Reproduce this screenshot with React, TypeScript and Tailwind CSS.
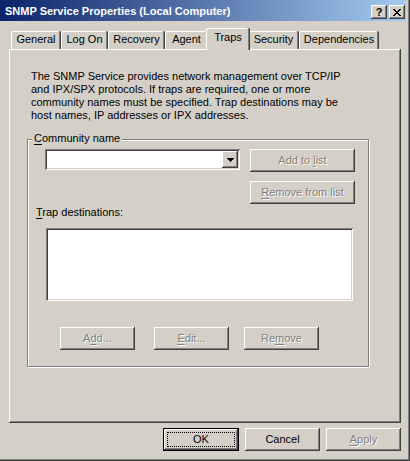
import type { ReactNode } from 'react';

const RAISED =
  'shadow-[inset_-1px_-1px_0_#404040,inset_1px_1px_0_#ffffff,inset_-2px_-2px_0_#808080,inset_2px_2px_0_#d4d0c8]';
const SUNKEN =
  'shadow-[inset_1px_1px_0_#808080,inset_-1px_-1px_0_#ffffff,inset_2px_2px_0_#404040,inset_-2px_-2px_0_#d4d0c8]';
const DISABLED = 'text-[#808080] [text-shadow:1px_1px_0_#ffffff]';

type Tab = { label: string; width: number; active?: boolean };

const TABS: Tab[] = [
  { label: 'General', width: 50 },
  { label: 'Log On', width: 47 },
  { label: 'Recovery', width: 57 },
  { label: 'Agent', width: 43 },
  { label: 'Traps', width: 40, active: true },
  { label: 'Security', width: 51 },
  { label: 'Dependencies', width: 80 },
];

function Key({ children }: { children: ReactNode }) {
  return <span className="underline underline-offset-[2px]">{children}</span>;
}

function Button({ children, width, disabled }: { children: ReactNode; width: number; disabled?: boolean }) {
  return (
    <div
      className={`flex h-[23px] shrink-0 items-center justify-center whitespace-pre bg-[#d4d0c8] ${RAISED} ${disabled ? DISABLED : 'text-black'}`}
      style={{ width }}
    >
      {children}
    </div>
  );
}

function CaptionButton({ children }: { children: ReactNode }) {
  return (
    <div className={`flex h-[14px] w-[16px] items-center justify-center bg-[#d4d0c8] ${RAISED}`}>{children}</div>
  );
}

function TabStrip() {
  return (
    <div className="mt-[7px] flex h-[21px] items-end pl-[11px]">
      {TABS.map((tab) =>
        tab.active ? (
          <div
            key={tab.label}
            className="relative z-10 -mx-[2px] -mb-[1px] flex h-[22px] items-start justify-center rounded-t-[2px] bg-[#d4d0c8] pt-[3px] shadow-[inset_-1px_0_0_#404040,inset_1px_1px_0_#ffffff,inset_-2px_0_0_#808080]"
            style={{ width: tab.width + 4 }}
          >
            {tab.label}
          </div>
        ) : (
          <div
            key={tab.label}
            className="flex h-[18px] items-start justify-center rounded-t-[2px] bg-[#d4d0c8] pt-[2px] shadow-[inset_-1px_0_0_#404040,inset_1px_1px_0_#ffffff,inset_-2px_0_0_#808080]"
            style={{ width: tab.width }}
          >
            {tab.label}
          </div>
        ),
      )}
    </div>
  );
}

function CommunityGroup() {
  return (
    <div className="relative ml-[18px] mt-[17px] h-[228px] w-[342px] border border-[#808080] pl-[8px] pt-[9px] shadow-[inset_1px_1px_0_#ffffff,1px_1px_0_#ffffff]">
      <div className="absolute -top-[8px] left-[4px] bg-[#d4d0c8] px-[2px] leading-[13px]">
        <Key>C</Key>ommunity name
      </div>

      <div className="flex items-start">
        <div className={`ml-[9px] flex h-[21px] w-[195px] items-start justify-end bg-white p-[2px] ${SUNKEN}`}>
          <div className={`flex h-[17px] w-[16px] items-center justify-center bg-[#d4d0c8] ${RAISED}`}>
            <svg width="7" height="4" viewBox="0 0 7 4" shapeRendering="crispEdges">
              <path d="M0 0h7v1H0zM1 1h5v1H1zM2 2h3v1H2zM3 3h1v1H3z" fill="#000" />
            </svg>
          </div>
        </div>
        <div className="ml-[10px]">
          <Button width={105} disabled>
            {'Add to '}
            <Key>l</Key>
            {'ist'}
          </Button>
        </div>
      </div>

      <div className="ml-[214px] mt-[9px]">
        <Button width={105} disabled>
          <Key>R</Key>emove from list
        </Button>
      </div>

      <div className="mt-[2px] leading-[13px]">
        <Key>T</Key>rap destinations:
      </div>

      <div className={`ml-[10px] mt-[9px] h-[73px] w-[307px] bg-white ${SUNKEN}`} />

      <div className="ml-[24px] mt-[26px] flex">
        <Button width={75} disabled>
          A<Key>d</Key>d...
        </Button>
        <div className="ml-[19px]">
          <Button width={75} disabled>
            <Key>E</Key>dit...
          </Button>
        </div>
        <div className="ml-[15px]">
          <Button width={75} disabled>
            Re<Key>m</Key>ove
          </Button>
        </div>
      </div>
    </div>
  );
}

export default function App() {
  return (
    <div className="relative flex h-[461px] w-[410px] flex-col bg-[#d4d0c8] font-['Liberation_Sans',Arial,sans-serif] text-[11px] leading-[13px] text-black shadow-[inset_-1px_-1px_0_#404040,inset_-2px_-2px_0_#808080] select-none">
      <div className="flex h-[21px] w-[406px] items-center bg-[linear-gradient(to_right,#0a246a,#a6caf0)] pr-[1px] pl-[5px] pt-[2px]">
        <div className="flex-1 font-bold text-white">SNMP Service Properties (Local Computer)</div>
        <div className="flex gap-[2px] pt-[1px]">
          <CaptionButton>
            <span className="text-[11px] font-bold leading-none">?</span>
          </CaptionButton>
          <CaptionButton>
            <svg width="8" height="7" viewBox="0 0 8 7" shapeRendering="crispEdges">
              <path
                d="M0 0h2v1H0zM6 0h2v1H6zM1 1h2v1H1zM5 1h2v1H5zM2 2h4v1H2zM3 3h2v1H3zM2 4h4v1H2zM1 5h2v1H1zM5 5h2v1H5zM0 6h2v1H0zM6 6h2v1H6z"
                fill="#000"
              />
            </svg>
          </CaptionButton>
        </div>
      </div>

      <TabStrip />

      <main className="ml-[9px] h-[374px] w-[392px] pt-[21px] shadow-[inset_-1px_-1px_0_#404040,inset_1px_1px_0_#ffffff,inset_-2px_-2px_0_#808080]">
        <p className="whitespace-nowrap pl-[22px] leading-[13px]">
          The SNMP Service provides network management over TCP/IP
          <br />
          and IPX/SPX protocols. If traps are required, one or more
          <br />
          community names must be specified. Trap destinations may be
          <br />
          host names, IP addresses or IPX addresses.
        </p>
        <CommunityGroup />
      </main>

      <footer className="mt-[5px] flex justify-end gap-[6px] pr-[9px]">
        <div className="flex h-[23px] w-[76px] border border-black bg-[#d4d0c8] p-[3px] shadow-[inset_-1px_-1px_0_#404040,inset_1px_1px_0_#ffffff,inset_-2px_-2px_0_#808080]">
          <div className="flex flex-1 items-center justify-center border border-dotted border-black">OK</div>
        </div>
        <Button width={75}>Cancel</Button>
        <Button width={75} disabled>
          <Key>A</Key>pply
        </Button>
      </footer>
    </div>
  );
}
